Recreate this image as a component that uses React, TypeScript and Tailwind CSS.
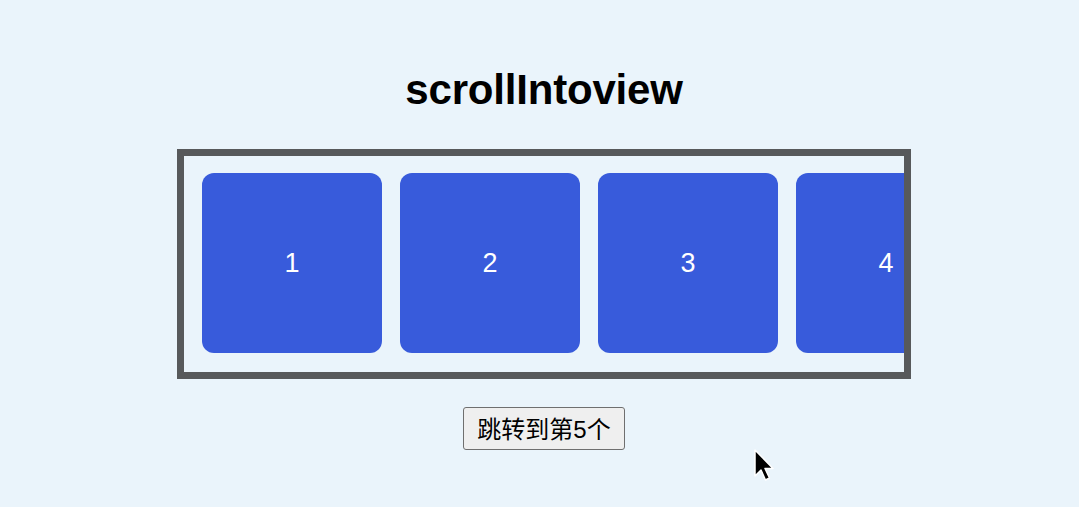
import React from "react";

export default function App() {
  const items = [1, 2, 3, 4];
  return (
    <div className="w-[1079px] h-[507px] bg-[#eaf4fb] relative overflow-hidden" style={{ fontFamily: '"Liberation Sans", Arial, sans-serif' }}>
      <div className="flex flex-col items-center pl-[9px] pt-[66px]">
        <h1 className="text-[42px] leading-[48px] font-bold text-black tracking-[-0.2px]">scrollIntoview</h1>
        <div className="mt-[35px] w-[734px] h-[230px] border-[7px] border-[#57595b] overflow-hidden">
          <div className="flex gap-[18px] pl-[18px] pt-[17px]">
            {items.map((n) => (
              <div key={n} className="shrink-0 w-[180px] h-[180px] rounded-[12px] bg-[#385bdb] flex items-center justify-center text-white text-[27px]">
                {n}
              </div>
            ))}
          </div>
        </div>
        <button
          className="mt-[28px] w-[162px] h-[43px] pt-[3px] bg-[#efefef] border border-[#6f6f6f] rounded-[3px] text-[24px] leading-[28px] text-black"
          style={{ fontFamily: '"Liberation Sans", "Noto Sans CJK SC", sans-serif' }}
        >
          跳转到第5个
        </button>
      </div>
      <svg className="absolute left-[753px] top-[449px]" width="24" height="36" viewBox="0 0 24 36">
        <path d="M2 1 L2 27 L8 21 L12.5 31 L16.5 29 L12 19.5 L20 19.5 Z" fill="black" stroke="white" strokeWidth="1.5" strokeLinejoin="round" />
      </svg>
    </div>
  );
}
